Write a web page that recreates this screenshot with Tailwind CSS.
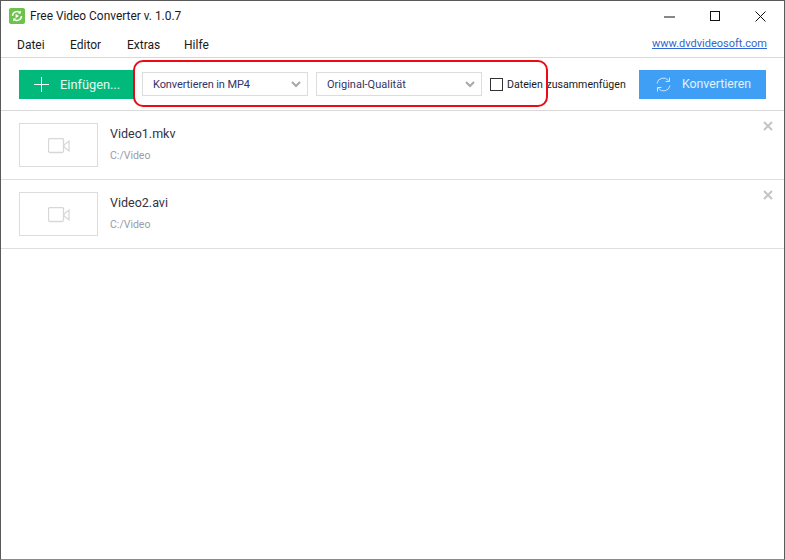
<!DOCTYPE html>
<html lang="de">
<head>
  <meta charset="UTF-8">
  <title>Free Video Converter</title>
  <script src="https://cdn.jsdelivr.net/npm/@tailwindcss/browser@4"></script>
</head>
<body class="bg-white">
  <div class="relative w-[785px] h-[560px] overflow-hidden bg-white border border-[#5a5a5a] border-b-[#8a8a8a] font-['Roboto','Noto_Sans',sans-serif] text-[12px] text-[#1a1a1a]">

    <!-- title bar -->
    <div class="flex items-center h-[31px] pl-[8px]">
      <svg width="16" height="16" viewBox="0 0 16 16" class="mt-[-1px]">
        <rect width="16" height="16" rx="2" fill="#6cc24a"/>
        <path d="M3.5 8a4.5 4.5 0 0 1 7.8-3M12.5 8a4.5 4.5 0 0 1-7.8 3" fill="none" stroke="#fff" stroke-width="1.5"/>
        <path d="M11.8 2.6v3h-3zM4.2 13.4v-3h3z" fill="#fff"/>
        <path d="M6.6 5.8l3.4 2.2-3.4 2.2z" fill="#fff"/>
      </svg>
      <span class="ml-[5px] mt-[1px] text-[11.9px] leading-none">Free Video Converter v. 1.0.7</span>
      <div class="ml-auto flex items-center translate-x-[1px]">
        <svg width="46" height="30" viewBox="0 0 46 30"><path d="M17 15h11" stroke="#111" stroke-width="1"/></svg>
        <svg width="46" height="30" viewBox="0 0 46 30"><rect x="17.500" y="9.500" width="9" height="9" fill="none" stroke="#111" stroke-width="1"/></svg>
        <svg width="46" height="30" viewBox="0 0 46 30"><path d="M16.500 9.500l10 10M26.500 9.500l-10 10" stroke="#111" stroke-width="1"/></svg>
      </div>
    </div>

    <!-- menu -->
    <div class="flex items-center h-[25px] pl-[16px] pr-[17px] border-b border-[#d9d9d9] box-content">
      <span class="w-[53px]">Datei</span>
      <span class="w-[57px]">Editor</span>
      <span class="w-[57px]">Extras</span>
      <span>Hilfe</span>
      <a class="ml-auto text-[#3366cc] underline text-[11px]">www.dvdvideosoft.com</a>
    </div>

    <!-- toolbar -->
    <div class="flex items-center h-[52px] pl-[18px] pr-[18px] border-b border-[#d9d9d9] box-content">
      <button class="flex items-center w-[115px] h-[29px] bg-[#00b97a] text-white/90 text-[12.8px] pl-[15px]">
        <svg width="15" height="15" viewBox="0 0 15 15"><path d="M7.500 0v15M0 7.500h15" stroke="#fff" stroke-width="1"/></svg>
        <span class="ml-[11px] mt-[1px]">Einfügen...</span>
      </button>
      <div class="flex items-center justify-between ml-[8px] w-[166px] h-[24px] border border-[#dcdcdc] pl-[10px] pr-[6px] text-[11px] text-[#333366]">
        <span class="mt-[2px] tracking-[-0.1px]">Konvertieren in MP4</span>
        <svg width="10" height="7" viewBox="0 0 10 7"><path d="M1 1l4 4 4-4" fill="none" stroke="#a8a8a8" stroke-width="2"/></svg>
      </div>
      <div class="flex items-center justify-between ml-[8px] w-[166px] h-[24px] border border-[#dcdcdc] pl-[10px] pr-[6px] text-[11px] text-[#333366]">
        <span class="mt-[2px]">Original-Qualität</span>
        <svg width="10" height="7" viewBox="0 0 10 7"><path d="M1 1l4 4 4-4" fill="none" stroke="#a8a8a8" stroke-width="2"/></svg>
      </div>
      <div class="w-[13px] h-[13px] ml-[8px] border border-[#333]"></div>
      <span class="ml-[4px] mt-[1px] text-[10.6px] [word-spacing:1px]">Dateien zusammenfügen</span>
      <button class="flex items-center ml-auto w-[127px] h-[29px] bg-[#3f9ff5] text-white/85 text-[12.3px] pl-[16px]">
        <svg width="17" height="17" viewBox="0 0 17 17">
          <path d="M2 7.500a6.500 6.500 0 0 1 11.500-3M15 9.500a6.500 6.500 0 0 1-11.500 3" fill="none" stroke="#cfe6fc" stroke-width="1"/>
          <path d="M14.500 1.500v4h-4M2.500 15.500v-4h4" fill="none" stroke="#cfe6fc" stroke-width="1"/>
        </svg>
        <span class="ml-[10px] mt-[1px]">Konvertieren</span>
      </button>
    </div>

    <!-- file list -->
    <div class="relative flex items-center h-[68px] pl-[18px] border-b border-[#dedede] box-content">
      <div class="flex items-center justify-center w-[79px] h-[44px] border border-[#dcdcdc]">
        <svg width="22" height="16" viewBox="0 0 22 16" fill="none" stroke="#d8d8d8" stroke-width="1.3" class="mt-[2px]">
          <rect x="0.500" y="0.500" width="15" height="14" rx="1.500"/>
          <path d="M16 7l5-4v10l-5-4z"/>
        </svg>
      </div>
      <div class="ml-[12px] flex flex-col mt-[-2px]">
        <span class="text-[12.500px] leading-[18px] text-[#333344] mt-[-1px]">Video1.mkv</span>
        <span class="mt-[6px] text-[10.500px] leading-[14px] text-[#9a9aa8]">C:/Video</span>
      </div>
      <svg class="absolute right-[11px] top-[10px]" width="10" height="10" viewBox="0 0 10 10"><path d="M1 1l8 8M9 1l-8 8" stroke="#c4c4c4" stroke-width="2"/></svg>
    </div>
    <div class="relative flex items-center h-[68px] pl-[18px] border-b border-[#dedede] box-content">
      <div class="flex items-center justify-center w-[79px] h-[44px] border border-[#dcdcdc]">
        <svg width="22" height="16" viewBox="0 0 22 16" fill="none" stroke="#d8d8d8" stroke-width="1.3" class="mt-[2px]">
          <rect x="0.500" y="0.500" width="15" height="14" rx="1.500"/>
          <path d="M16 7l5-4v10l-5-4z"/>
        </svg>
      </div>
      <div class="ml-[12px] flex flex-col mt-[-2px]">
        <span class="text-[12.500px] leading-[18px] text-[#333344] mt-[-1px]">Video2.avi</span>
        <span class="mt-[6px] text-[10.500px] leading-[14px] text-[#9a9aa8]">C:/Video</span>
      </div>
      <svg class="absolute right-[11px] top-[10px]" width="10" height="10" viewBox="0 0 10 10"><path d="M1 1l8 8M9 1l-8 8" stroke="#c4c4c4" stroke-width="2"/></svg>
    </div>

    <!-- red annotation -->
    <div class="absolute left-[132px] top-[59px] w-[415px] h-[47px] border-2 border-[#ee0a14] rounded-[10px]"></div>
  </div>
</body>
</html>
